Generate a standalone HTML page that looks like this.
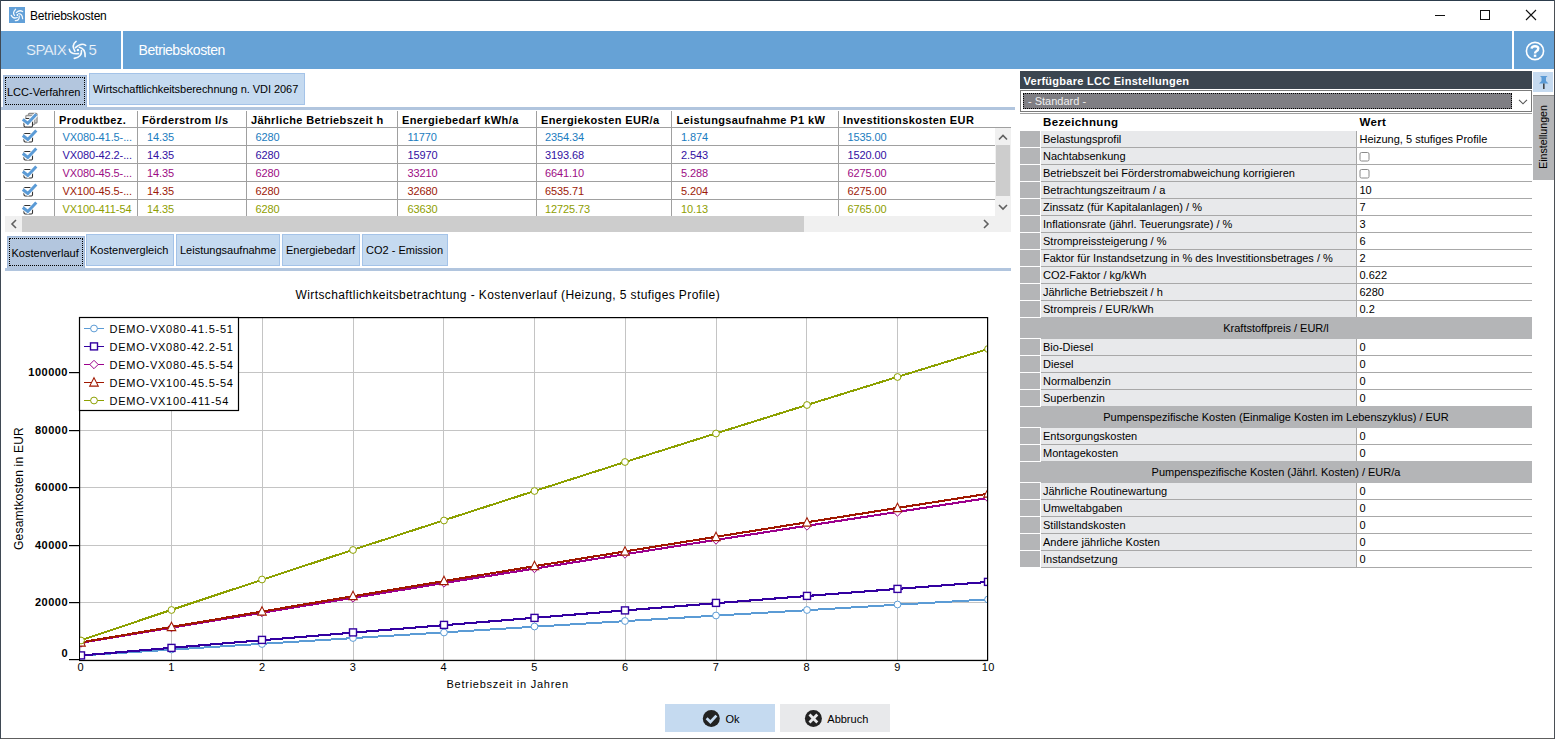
<!DOCTYPE html>
<html><head><meta charset="utf-8"><title>Betriebskosten</title>
<style>
html,body{margin:0;padding:0;}
body{width:1555px;height:739px;position:relative;overflow:hidden;background:#3c4650;font-family:"Liberation Sans", sans-serif;}
.t{position:absolute;white-space:nowrap;line-height:normal;}
.b{position:absolute;box-sizing:border-box;}
svg{position:absolute;left:0;top:0;}
</style></head><body>

<div class="b" style="left:0px;top:0px;width:1555px;height:1px;background:#2c3c4c;"></div>
<div class="b" style="left:0px;top:738px;width:1555px;height:1px;background:#5e5e5e;"></div>
<div class="b" style="left:0px;top:0px;width:1px;height:739px;background:#3f4954;"></div>
<div class="b" style="left:1554px;top:0px;width:1px;height:739px;background:#4a4f55;"></div>
<div class="b" style="left:1px;top:1px;width:1553px;height:737px;background:#fff;"></div>
<svg width="1555" height="70" style="left:0;top:0">
<rect x="9" y="7" width="16" height="16" fill="#62a0d8"/>
<g fill="none" stroke="#fff" stroke-width="1.25" stroke-linecap="round" opacity="0.93">
<path d="M15.6 9.2 Q12.15 12.75 14.5 15.3"/>
<path d="M22.6 11.6 Q19.55 9.5 16.3 12.6"/>
<path d="M18.7 13.6 Q22.35 13.85 22.6 18.7"/>
<path d="M19.2 16 Q19.75 20.7 15.3 20.6"/>
<path d="M11.2 15.3 Q12.75 19.2 17.3 17.5"/>
</g>
<circle cx="17.4" cy="15" r="0.9" fill="#fff"/>
<!-- window controls -->
<rect x="1435" y="15" width="10" height="1" fill="#111"/>
<rect x="1480.5" y="10.5" width="9" height="9" fill="none" stroke="#111" stroke-width="1"/>
<path d="M1526 10 L1536 20 M1536 10 L1526 20" stroke="#111" stroke-width="1.1"/>
</svg>
<div class="t" style="left:30px;top:9px;font-size:12px;color:#000;letter-spacing:-0.2px;">Betriebskosten</div>
<div class="b" style="left:1px;top:31px;width:1553px;height:38px;background:#66a2d6;"></div>
<div class="b" style="left:121px;top:31px;width:2px;height:38px;background:#fff;"></div>
<div class="b" style="left:1512px;top:31px;width:2px;height:38px;background:#fff;"></div>
<div class="t" style="left:26px;top:41px;font-size:15px;color:#f4f8fc;letter-spacing:-0.6px;-webkit-text-stroke:0.22px #66a2d6;">SPAIX</div>
<div class="t" style="left:88.5px;top:41px;font-size:15px;color:#f4f8fc;-webkit-text-stroke:0.22px #66a2d6;">5</div>
<svg width="1555" height="70" style="left:0;top:0">
<g fill="none" stroke="#fff" stroke-width="1.6" stroke-linecap="round" opacity="0.95">
<path d="M76.1 41.4 Q71.1 45.3 74.9 51.2"/>
<path d="M85.7 45.3 Q81.2 42.35 75.5 47.6"/>
<path d="M79.4 47.3 Q85.55 48.65 85.1 56.6"/>
<path d="M81.5 50.6 Q82.1 56.9 74.3 58.4"/>
<path d="M69.3 49.4 Q70.1 54.5 78.5 53.6"/>
</g>
<circle cx="77.9" cy="50" r="1.2" fill="#fff"/>
<circle cx="64.8" cy="50" r="0.8" fill="#dfe9f4"/>
<!-- help -->
<circle cx="1535" cy="51" r="8.6" fill="none" stroke="#fff" stroke-width="1.6"/>
<path d="M1531.6 48.6 Q1531.8 46.2 1535 46.2 Q1538.3 46.2 1538.3 48.6 Q1538.3 50.2 1536.4 51.2 Q1535 52 1535 53.6" fill="none" stroke="#fff" stroke-width="2.4"/>
<rect x="1533.8" y="54.6" width="2.5" height="2.3" fill="#fff"/>
</svg>
<div class="t" style="left:138.5px;top:42px;font-size:14px;color:#fff;letter-spacing:-0.45px;">Betriebskosten</div>
<div class="b" style="left:3px;top:75px;width:84px;height:32px;background:#b3c6de;border:1px solid #9fb7d8;border-bottom:none;"></div>
<div class="b" style="left:5px;top:77px;width:80px;height:28px;border:1px dotted #000;"></div>
<div class="t" style="left:7px;top:86px;font-size:11px;color:#000;">LCC-Verfahren</div>
<div class="b" style="left:89px;top:73px;width:216px;height:32px;background:#c5daf0;border:1px solid #a4c3e8;"></div>
<div class="t" style="left:93px;top:83px;font-size:11px;color:#000;letter-spacing:-0.05px;">Wirtschaftlichkeitsberechnung n. VDI 2067</div>
<div class="b" style="left:1px;top:107px;width:1014px;height:3px;background:#b1c5de;"></div>
<div class="b" style="left:5px;top:127px;width:1006px;height:1px;background:#a0a0a0;"></div>
<div class="b" style="left:5px;top:145px;width:990px;height:1px;background:#a0a0a0;"></div>
<div class="b" style="left:5px;top:163px;width:990px;height:1px;background:#a0a0a0;"></div>
<div class="b" style="left:5px;top:181px;width:990px;height:1px;background:#a0a0a0;"></div>
<div class="b" style="left:5px;top:199px;width:990px;height:1px;background:#a0a0a0;"></div>
<div class="b" style="left:54px;top:111px;width:1px;height:105px;background:#a0a0a0;"></div>
<div class="b" style="left:137px;top:111px;width:1px;height:105px;background:#a0a0a0;"></div>
<div class="b" style="left:246px;top:111px;width:1px;height:105px;background:#a0a0a0;"></div>
<div class="b" style="left:397px;top:111px;width:1px;height:105px;background:#a0a0a0;"></div>
<div class="b" style="left:536px;top:111px;width:1px;height:105px;background:#a0a0a0;"></div>
<div class="b" style="left:671px;top:111px;width:1px;height:105px;background:#a0a0a0;"></div>
<div class="b" style="left:838px;top:111px;width:1px;height:105px;background:#a0a0a0;"></div>
<div class="t" style="left:59px;top:114px;font-size:11px;color:#000;font-weight:700;letter-spacing:0.38px;font-family:'Liberation Sans';">Produktbez.</div>
<div class="t" style="left:142px;top:114px;font-size:11px;color:#000;font-weight:700;letter-spacing:0.38px;font-family:'Liberation Sans';">Förderstrom l/s</div>
<div class="t" style="left:251px;top:114px;font-size:11px;color:#000;font-weight:700;letter-spacing:0.38px;font-family:'Liberation Sans';">Jährliche Betriebszeit h</div>
<div class="t" style="left:402px;top:114px;font-size:11px;color:#000;font-weight:700;letter-spacing:0.38px;font-family:'Liberation Sans';">Energiebedarf kWh/a</div>
<div class="t" style="left:541px;top:114px;font-size:11px;color:#000;font-weight:700;letter-spacing:0.38px;font-family:'Liberation Sans';">Energiekosten EUR/a</div>
<div class="t" style="left:676.5px;top:114px;font-size:11px;color:#000;font-weight:700;letter-spacing:0.38px;font-family:'Liberation Sans';">Leistungsaufnahme P1 kW</div>
<div class="t" style="left:843px;top:114px;font-size:11px;color:#000;font-weight:700;letter-spacing:0.38px;font-family:'Liberation Sans';">Investitionskosten EUR</div>
<div style="position:absolute;left:0;top:0;width:1555px;height:216px;overflow:hidden">
<div class="t" style="left:62.5px;top:131px;font-size:11px;color:#1a7cc0;letter-spacing:-0.1px;">VX080-41.5-...</div>
<div class="t" style="left:147px;top:131px;font-size:11px;color:#1a7cc0;letter-spacing:-0.1px;">14.35</div>
<div class="t" style="left:255.5px;top:131px;font-size:11px;color:#1a7cc0;letter-spacing:-0.1px;">6280</div>
<div class="t" style="left:407.5px;top:131px;font-size:11px;color:#1a7cc0;letter-spacing:-0.1px;">11770</div>
<div class="t" style="left:545px;top:131px;font-size:11px;color:#1a7cc0;letter-spacing:-0.1px;">2354.34</div>
<div class="t" style="left:681px;top:131px;font-size:11px;color:#1a7cc0;letter-spacing:-0.1px;">1.874</div>
<div class="t" style="left:847.5px;top:131px;font-size:11px;color:#1a7cc0;letter-spacing:-0.1px;">1535.00</div>
<div class="t" style="left:62.5px;top:149px;font-size:11px;color:#3210a2;letter-spacing:-0.1px;">VX080-42.2-...</div>
<div class="t" style="left:147px;top:149px;font-size:11px;color:#3210a2;letter-spacing:-0.1px;">14.35</div>
<div class="t" style="left:255.5px;top:149px;font-size:11px;color:#3210a2;letter-spacing:-0.1px;">6280</div>
<div class="t" style="left:407.5px;top:149px;font-size:11px;color:#3210a2;letter-spacing:-0.1px;">15970</div>
<div class="t" style="left:545px;top:149px;font-size:11px;color:#3210a2;letter-spacing:-0.1px;">3193.68</div>
<div class="t" style="left:681px;top:149px;font-size:11px;color:#3210a2;letter-spacing:-0.1px;">2.543</div>
<div class="t" style="left:847.5px;top:149px;font-size:11px;color:#3210a2;letter-spacing:-0.1px;">1520.00</div>
<div class="t" style="left:62.5px;top:167px;font-size:11px;color:#9c0c84;letter-spacing:-0.1px;">VX080-45.5-...</div>
<div class="t" style="left:147px;top:167px;font-size:11px;color:#9c0c84;letter-spacing:-0.1px;">14.35</div>
<div class="t" style="left:255.5px;top:167px;font-size:11px;color:#9c0c84;letter-spacing:-0.1px;">6280</div>
<div class="t" style="left:407.5px;top:167px;font-size:11px;color:#9c0c84;letter-spacing:-0.1px;">33210</div>
<div class="t" style="left:545px;top:167px;font-size:11px;color:#9c0c84;letter-spacing:-0.1px;">6641.10</div>
<div class="t" style="left:681px;top:167px;font-size:11px;color:#9c0c84;letter-spacing:-0.1px;">5.288</div>
<div class="t" style="left:847.5px;top:167px;font-size:11px;color:#9c0c84;letter-spacing:-0.1px;">6275.00</div>
<div class="t" style="left:62.5px;top:185px;font-size:11px;color:#9c1a08;letter-spacing:-0.1px;">VX100-45.5-...</div>
<div class="t" style="left:147px;top:185px;font-size:11px;color:#9c1a08;letter-spacing:-0.1px;">14.35</div>
<div class="t" style="left:255.5px;top:185px;font-size:11px;color:#9c1a08;letter-spacing:-0.1px;">6280</div>
<div class="t" style="left:407.5px;top:185px;font-size:11px;color:#9c1a08;letter-spacing:-0.1px;">32680</div>
<div class="t" style="left:545px;top:185px;font-size:11px;color:#9c1a08;letter-spacing:-0.1px;">6535.71</div>
<div class="t" style="left:681px;top:185px;font-size:11px;color:#9c1a08;letter-spacing:-0.1px;">5.204</div>
<div class="t" style="left:847.5px;top:185px;font-size:11px;color:#9c1a08;letter-spacing:-0.1px;">6275.00</div>
<div class="t" style="left:62.5px;top:203px;font-size:11px;color:#8e9e00;letter-spacing:-0.1px;">VX100-411-54</div>
<div class="t" style="left:147px;top:203px;font-size:11px;color:#8e9e00;letter-spacing:-0.1px;">14.35</div>
<div class="t" style="left:255.5px;top:203px;font-size:11px;color:#8e9e00;letter-spacing:-0.1px;">6280</div>
<div class="t" style="left:407.5px;top:203px;font-size:11px;color:#8e9e00;letter-spacing:-0.1px;">63630</div>
<div class="t" style="left:545px;top:203px;font-size:11px;color:#8e9e00;letter-spacing:-0.1px;">12725.73</div>
<div class="t" style="left:681px;top:203px;font-size:11px;color:#8e9e00;letter-spacing:-0.1px;">10.13</div>
<div class="t" style="left:847.5px;top:203px;font-size:11px;color:#8e9e00;letter-spacing:-0.1px;">6765.00</div>
</div>
<div style="position:absolute;left:0;top:0;width:60px;height:216px;overflow:hidden"><svg width="60" height="230" style="left:0;top:0"><rect x="28.5" y="113.5" width="8.5" height="9.5" rx="1" fill="#f0f0f0" stroke="#8a8a8a" stroke-width="1.3"/><rect x="25.8" y="115.5" width="9" height="9" rx="1" fill="#f6f6f6" stroke="#9a9a9a" stroke-width="1.3"/><rect x="24" y="118.5" width="8.5" height="8.5" rx="1.2" fill="#fff" stroke="#333" stroke-width="1.1"/><path d="M22.8 119.3 L27.8 123.3 L36.3 114.3" fill="none" stroke="#fff" stroke-width="4.6"/><path d="M22.8 119.3 L27.8 123.3 L36.3 114.3" fill="none" stroke="#5b9bd6" stroke-width="3"/><rect x="24" y="133.5" width="8.5" height="8.5" rx="1.2" fill="#fff" stroke="#333" stroke-width="1.1"/><path d="M22.8 135.5 L27.8 139.5 L36.3 130.5" fill="none" stroke="#fff" stroke-width="4.6"/><path d="M22.8 135.5 L27.8 139.5 L36.3 130.5" fill="none" stroke="#5b9bd6" stroke-width="3"/><rect x="24" y="151.5" width="8.5" height="8.5" rx="1.2" fill="#fff" stroke="#333" stroke-width="1.1"/><path d="M22.8 153.5 L27.8 157.5 L36.3 148.5" fill="none" stroke="#fff" stroke-width="4.6"/><path d="M22.8 153.5 L27.8 157.5 L36.3 148.5" fill="none" stroke="#5b9bd6" stroke-width="3"/><rect x="24" y="169.5" width="8.5" height="8.5" rx="1.2" fill="#fff" stroke="#333" stroke-width="1.1"/><path d="M22.8 171.5 L27.8 175.5 L36.3 166.5" fill="none" stroke="#fff" stroke-width="4.6"/><path d="M22.8 171.5 L27.8 175.5 L36.3 166.5" fill="none" stroke="#5b9bd6" stroke-width="3"/><rect x="24" y="187.5" width="8.5" height="8.5" rx="1.2" fill="#fff" stroke="#333" stroke-width="1.1"/><path d="M22.8 189.5 L27.8 193.5 L36.3 184.5" fill="none" stroke="#fff" stroke-width="4.6"/><path d="M22.8 189.5 L27.8 193.5 L36.3 184.5" fill="none" stroke="#5b9bd6" stroke-width="3"/><rect x="24" y="205.5" width="8.5" height="8.5" rx="1.2" fill="#fff" stroke="#333" stroke-width="1.1"/><path d="M22.8 207.5 L27.8 211.5 L36.3 202.5" fill="none" stroke="#fff" stroke-width="4.6"/><path d="M22.8 207.5 L27.8 211.5 L36.3 202.5" fill="none" stroke="#5b9bd6" stroke-width="3"/></svg></div>
<div class="b" style="left:995px;top:128px;width:16px;height:88px;background:#f0f0f0;"></div>
<div class="b" style="left:996px;top:145px;width:14px;height:51px;background:#cdcdcd;"></div>
<div class="b" style="left:5px;top:216px;width:1006px;height:16px;background:#f0f0f0;"></div>
<div class="b" style="left:22px;top:216px;width:782px;height:16px;background:#cdcdcd;"></div>
<svg width="1020" height="240" style="left:0;top:0">
<path d="M999 139.5 L1003 135.5 L1007 139.5" fill="none" stroke="#606060" stroke-width="1.6"/>
<path d="M999 205 L1003 209 L1007 205" fill="none" stroke="#606060" stroke-width="1.6"/>
<path d="M16 220 L12 224 L16 228" fill="none" stroke="#606060" stroke-width="1.6"/>
<path d="M984 220 L988 224 L984 228" fill="none" stroke="#606060" stroke-width="1.6"/>
</svg>
<div class="b" style="left:7px;top:236px;width:78px;height:32px;background:#b3c6de;border:1px solid #9fb7d8;border-bottom:none;"></div>
<div class="b" style="left:9px;top:238px;width:74px;height:28px;border:1px dotted #000;"></div>
<div class="t" style="left:11.5px;top:247px;font-size:11px;color:#000;">Kostenverlauf</div>
<div class="b" style="left:86px;top:234px;width:88px;height:32px;background:#c5daf0;border:1px solid #a4c3e8;"></div>
<div class="t" style="left:90px;top:244px;font-size:11px;color:#000;">Kostenvergleich</div>
<div class="b" style="left:176px;top:234px;width:104px;height:32px;background:#c5daf0;border:1px solid #a4c3e8;"></div>
<div class="t" style="left:180px;top:244px;font-size:11px;color:#000;">Leistungsaufnahme</div>
<div class="b" style="left:282px;top:234px;width:78px;height:32px;background:#c5daf0;border:1px solid #a4c3e8;"></div>
<div class="t" style="left:286px;top:244px;font-size:11px;color:#000;">Energiebedarf</div>
<div class="b" style="left:362px;top:234px;width:86px;height:32px;background:#c5daf0;border:1px solid #a4c3e8;"></div>
<div class="t" style="left:366px;top:244px;font-size:11px;color:#000;">CO2 - Emission</div>
<div class="b" style="left:5px;top:268px;width:1006px;height:3px;background:#b1c5de;"></div>
<div class="t" style="left:295.5px;top:288px;font-size:12px;color:#000;letter-spacing:0.4px;">Wirtschaftlichkeitsbetrachtung - Kostenverlauf (Heizung, 5 stufiges Profile)</div>
<svg width="1010" height="700" style="left:0;top:0">
<rect x="171" y="318" width="1" height="342" fill="#c4c4c4"/>
<rect x="262" y="318" width="1" height="342" fill="#c4c4c4"/>
<rect x="353" y="318" width="1" height="342" fill="#c4c4c4"/>
<rect x="443" y="318" width="1" height="342" fill="#c4c4c4"/>
<rect x="534" y="318" width="1" height="342" fill="#c4c4c4"/>
<rect x="625" y="318" width="1" height="342" fill="#c4c4c4"/>
<rect x="716" y="318" width="1" height="342" fill="#c4c4c4"/>
<rect x="806" y="318" width="1" height="342" fill="#c4c4c4"/>
<rect x="897" y="318" width="1" height="342" fill="#c4c4c4"/>
<rect x="80" y="602" width="907" height="1" fill="#c4c4c4"/>
<rect x="80" y="545" width="907" height="1" fill="#c4c4c4"/>
<rect x="80" y="487" width="907" height="1" fill="#c4c4c4"/>
<rect x="80" y="430" width="907" height="1" fill="#c4c4c4"/>
<rect x="80" y="372" width="907" height="1" fill="#c4c4c4"/>
<rect x="79" y="317" width="909" height="1.2" fill="#000"/>
<rect x="987" y="317" width="1.2" height="344" fill="#000"/>
<rect x="79" y="317" width="1.2" height="344" fill="#000"/>
<rect x="79" y="659.8" width="909" height="1.3" fill="#000"/>
<rect x="69" y="659" width="10" height="1.2" fill="#000"/>
<rect x="69" y="602" width="10" height="1.2" fill="#000"/>
<rect x="69" y="545" width="10" height="1.2" fill="#000"/>
<rect x="69" y="487" width="10" height="1.2" fill="#000"/>
<rect x="69" y="430" width="10" height="1.2" fill="#000"/>
<rect x="69" y="372" width="10" height="1.2" fill="#000"/>
<defs><clipPath id="pc"><rect x="80" y="318" width="907" height="342"/></clipPath></defs>
<g clip-path="url(#pc)">
<path d="M80.8 655.5 L171.5 649.6 L262.2 643.8 L353.0 638.1 L443.8 632.4 L534.5 626.7 L625.2 621.1 L716.0 615.6 L806.8 610.2 L897.5 604.7 L988.2 599.4" fill="none" stroke="#5b9bd5" stroke-width="2.0" shape-rendering="crispEdges"/>
<circle cx="81.0" cy="655.5" r="3.4" fill="#fff" stroke="#5b9bd5" stroke-width="1"/>
<circle cx="171.5" cy="649.5" r="3.4" fill="#fff" stroke="#5b9bd5" stroke-width="1"/>
<circle cx="262.0" cy="644.0" r="3.4" fill="#fff" stroke="#5b9bd5" stroke-width="1"/>
<circle cx="353.0" cy="638.0" r="3.4" fill="#fff" stroke="#5b9bd5" stroke-width="1"/>
<circle cx="444.0" cy="632.5" r="3.4" fill="#fff" stroke="#5b9bd5" stroke-width="1"/>
<circle cx="534.5" cy="626.5" r="3.4" fill="#fff" stroke="#5b9bd5" stroke-width="1"/>
<circle cx="625.0" cy="621.0" r="3.4" fill="#fff" stroke="#5b9bd5" stroke-width="1"/>
<circle cx="716.0" cy="615.5" r="3.4" fill="#fff" stroke="#5b9bd5" stroke-width="1"/>
<circle cx="807.0" cy="610.0" r="3.4" fill="#fff" stroke="#5b9bd5" stroke-width="1"/>
<circle cx="897.5" cy="604.5" r="3.4" fill="#fff" stroke="#5b9bd5" stroke-width="1"/>
<circle cx="988.0" cy="599.5" r="3.4" fill="#fff" stroke="#5b9bd5" stroke-width="1"/>
<path d="M80.8 655.5 L171.5 647.8 L262.2 640.2 L353.0 632.6 L443.8 625.2 L534.5 617.8 L625.2 610.4 L716.0 603.2 L806.8 596.0 L897.5 588.9 L988.2 581.9" fill="none" stroke="#3300a0" stroke-width="2.1" shape-rendering="crispEdges"/>
<rect x="77.5" y="651.9" width="7" height="7" fill="#fff" stroke="#3300a0" stroke-width="1.4"/>
<rect x="168.0" y="644.4" width="7" height="7" fill="#fff" stroke="#3300a0" stroke-width="1.4"/>
<rect x="258.5" y="636.4" width="7" height="7" fill="#fff" stroke="#3300a0" stroke-width="1.4"/>
<rect x="349.5" y="628.9" width="7" height="7" fill="#fff" stroke="#3300a0" stroke-width="1.4"/>
<rect x="440.5" y="621.4" width="7" height="7" fill="#fff" stroke="#3300a0" stroke-width="1.4"/>
<rect x="531.0" y="614.4" width="7" height="7" fill="#fff" stroke="#3300a0" stroke-width="1.4"/>
<rect x="621.5" y="606.9" width="7" height="7" fill="#fff" stroke="#3300a0" stroke-width="1.4"/>
<rect x="712.5" y="599.4" width="7" height="7" fill="#fff" stroke="#3300a0" stroke-width="1.4"/>
<rect x="803.5" y="592.4" width="7" height="7" fill="#fff" stroke="#3300a0" stroke-width="1.4"/>
<rect x="894.0" y="585.4" width="7" height="7" fill="#fff" stroke="#3300a0" stroke-width="1.4"/>
<rect x="984.5" y="578.4" width="7" height="7" fill="#fff" stroke="#3300a0" stroke-width="1.4"/>
<path d="M80.8 642.8 L171.5 627.7 L262.2 612.7 L353.0 597.8 L443.8 583.1 L534.5 568.6 L625.2 554.2 L716.0 539.9 L806.8 525.8 L897.5 511.9 L988.2 498.0" fill="none" stroke="#9c008c" stroke-width="2.1" shape-rendering="crispEdges"/>
<path d="M81.0 638.8 L85.2 643.0 L81.0 647.2 L76.8 643.0 Z" fill="#fff" stroke="#9c008c" stroke-width="1"/>
<path d="M171.5 623.3 L175.7 627.5 L171.5 631.7 L167.3 627.5 Z" fill="#fff" stroke="#9c008c" stroke-width="1"/>
<path d="M262.0 608.3 L266.2 612.5 L262.0 616.7 L257.8 612.5 Z" fill="#fff" stroke="#9c008c" stroke-width="1"/>
<path d="M353.0 593.8 L357.2 598.0 L353.0 602.2 L348.8 598.0 Z" fill="#fff" stroke="#9c008c" stroke-width="1"/>
<path d="M444.0 578.8 L448.2 583.0 L444.0 587.2 L439.8 583.0 Z" fill="#fff" stroke="#9c008c" stroke-width="1"/>
<path d="M534.5 564.3 L538.7 568.5 L534.5 572.7 L530.3 568.5 Z" fill="#fff" stroke="#9c008c" stroke-width="1"/>
<path d="M625.0 549.8 L629.2 554.0 L625.0 558.2 L620.8 554.0 Z" fill="#fff" stroke="#9c008c" stroke-width="1"/>
<path d="M716.0 535.8 L720.2 540.0 L716.0 544.2 L711.8 540.0 Z" fill="#fff" stroke="#9c008c" stroke-width="1"/>
<path d="M807.0 521.8 L811.2 526.0 L807.0 530.2 L802.8 526.0 Z" fill="#fff" stroke="#9c008c" stroke-width="1"/>
<path d="M897.5 507.8 L901.7 512.0 L897.5 516.2 L893.3 512.0 Z" fill="#fff" stroke="#9c008c" stroke-width="1"/>
<path d="M988.0 493.8 L992.2 498.0 L988.0 502.2 L983.8 498.0 Z" fill="#fff" stroke="#9c008c" stroke-width="1"/>
<path d="M80.8 642.4 L171.5 626.9 L262.2 611.5 L353.0 596.2 L443.8 581.1 L534.5 566.2 L625.2 551.4 L716.0 536.8 L806.8 522.3 L897.5 507.9 L988.2 493.7" fill="none" stroke="#a01800" stroke-width="2.1" shape-rendering="crispEdges"/>
<path d="M81.0 637.7 L85.3 646.1 L76.7 646.1 Z" fill="#fff" stroke="#a01800" stroke-width="1.05"/>
<path d="M171.5 622.2 L175.8 630.6 L167.2 630.6 Z" fill="#fff" stroke="#a01800" stroke-width="1.05"/>
<path d="M262.0 606.7 L266.3 615.1 L257.7 615.1 Z" fill="#fff" stroke="#a01800" stroke-width="1.05"/>
<path d="M353.0 591.2 L357.3 599.6 L348.7 599.6 Z" fill="#fff" stroke="#a01800" stroke-width="1.05"/>
<path d="M444.0 576.2 L448.3 584.6 L439.7 584.6 Z" fill="#fff" stroke="#a01800" stroke-width="1.05"/>
<path d="M534.5 561.2 L538.8 569.6 L530.2 569.6 Z" fill="#fff" stroke="#a01800" stroke-width="1.05"/>
<path d="M625.0 546.7 L629.3 555.1 L620.7 555.1 Z" fill="#fff" stroke="#a01800" stroke-width="1.05"/>
<path d="M716.0 532.2 L720.3 540.6 L711.7 540.6 Z" fill="#fff" stroke="#a01800" stroke-width="1.05"/>
<path d="M807.0 517.7 L811.3 526.1 L802.7 526.1 Z" fill="#fff" stroke="#a01800" stroke-width="1.05"/>
<path d="M897.5 503.2 L901.8 511.6 L893.2 511.6 Z" fill="#fff" stroke="#a01800" stroke-width="1.05"/>
<path d="M988.0 488.7 L992.3 497.1 L983.7 497.1 Z" fill="#fff" stroke="#a01800" stroke-width="1.05"/>
<path d="M80.8 640.3 L171.5 609.8 L262.2 579.7 L353.0 549.8 L443.8 520.3 L534.5 491.0 L625.2 462.0 L716.0 433.4 L806.8 405.0 L897.5 376.9 L988.2 349.0" fill="none" stroke="#8ca000" stroke-width="2.0" shape-rendering="crispEdges"/>
<circle cx="81.0" cy="640.5" r="3.4" fill="#fff" stroke="#8ca000" stroke-width="1"/>
<circle cx="171.5" cy="610.0" r="3.4" fill="#fff" stroke="#8ca000" stroke-width="1"/>
<circle cx="262.0" cy="579.5" r="3.4" fill="#fff" stroke="#8ca000" stroke-width="1"/>
<circle cx="353.0" cy="550.0" r="3.4" fill="#fff" stroke="#8ca000" stroke-width="1"/>
<circle cx="444.0" cy="520.5" r="3.4" fill="#fff" stroke="#8ca000" stroke-width="1"/>
<circle cx="534.5" cy="491.0" r="3.4" fill="#fff" stroke="#8ca000" stroke-width="1"/>
<circle cx="625.0" cy="462.0" r="3.4" fill="#fff" stroke="#8ca000" stroke-width="1"/>
<circle cx="716.0" cy="433.5" r="3.4" fill="#fff" stroke="#8ca000" stroke-width="1"/>
<circle cx="807.0" cy="405.0" r="3.4" fill="#fff" stroke="#8ca000" stroke-width="1"/>
<circle cx="897.5" cy="377.0" r="3.4" fill="#fff" stroke="#8ca000" stroke-width="1"/>
<circle cx="988.0" cy="349.0" r="3.4" fill="#fff" stroke="#8ca000" stroke-width="1"/>
</g>
<rect x="79.5" y="317.5" width="159" height="93" fill="#fff" stroke="#000" stroke-width="1.2"/>
<rect x="84" y="328.0" width="20" height="1" fill="#5b9bd5"/>
<circle cx="94" cy="328.5" r="3.4" fill="#fff" stroke="#5b9bd5" stroke-width="1"/>
<rect x="84" y="346.0" width="20" height="1" fill="#3300a0"/>
<rect x="90.5" y="342.9" width="7" height="7" fill="#fff" stroke="#3300a0" stroke-width="1.4"/>
<rect x="84" y="364.0" width="20" height="1" fill="#9c008c"/>
<path d="M94 360.3 L98.2 364.5 L94 368.7 L89.8 364.5 Z" fill="#fff" stroke="#9c008c" stroke-width="1"/>
<rect x="84" y="382.0" width="20" height="1" fill="#a01800"/>
<path d="M94 377.7 L98.3 386.1 L89.7 386.1 Z" fill="#fff" stroke="#a01800" stroke-width="1.05"/>
<rect x="84" y="400.0" width="20" height="1" fill="#8ca000"/>
<circle cx="94" cy="400.5" r="3.4" fill="#fff" stroke="#8ca000" stroke-width="1"/>
<text x="0" y="0" transform="translate(22.5 488.5) rotate(-90)" text-anchor="middle" font-family="Liberation Sans" font-size="12" letter-spacing="0.22">Gesamtkosten in EUR</text>
</svg>
<div class="t" style="left:109.5px;top:323px;font-size:11px;color:#000;letter-spacing:0.75px;">DEMO-VX080-41.5-51</div>
<div class="t" style="left:109.5px;top:341px;font-size:11px;color:#000;letter-spacing:0.75px;">DEMO-VX080-42.2-51</div>
<div class="t" style="left:109.5px;top:359px;font-size:11px;color:#000;letter-spacing:0.75px;">DEMO-VX080-45.5-54</div>
<div class="t" style="left:109.5px;top:377px;font-size:11px;color:#000;letter-spacing:0.75px;">DEMO-VX100-45.5-54</div>
<div class="t" style="left:109.5px;top:395px;font-size:11px;color:#000;letter-spacing:0.75px;">DEMO-VX100-411-54</div>
<div class="t" style="right:1487px;top:646.5px;font-size:11px;font-weight:700;letter-spacing:0.5px;">0</div>
<div class="t" style="right:1487px;top:596px;font-size:11px;font-weight:700;letter-spacing:0.5px;">20000</div>
<div class="t" style="right:1487px;top:539px;font-size:11px;font-weight:700;letter-spacing:0.5px;">40000</div>
<div class="t" style="right:1487px;top:481px;font-size:11px;font-weight:700;letter-spacing:0.5px;">60000</div>
<div class="t" style="right:1487px;top:424px;font-size:11px;font-weight:700;letter-spacing:0.5px;">80000</div>
<div class="t" style="right:1487px;top:366px;font-size:11px;font-weight:700;letter-spacing:0.5px;">100000</div>
<div class="t" style="left:60.8px;width:40px;text-align:center;top:661px;font-size:11px;letter-spacing:0.3px;">0</div>
<div class="t" style="left:151.5px;width:40px;text-align:center;top:661px;font-size:11px;letter-spacing:0.3px;">1</div>
<div class="t" style="left:242.2px;width:40px;text-align:center;top:661px;font-size:11px;letter-spacing:0.3px;">2</div>
<div class="t" style="left:333.0px;width:40px;text-align:center;top:661px;font-size:11px;letter-spacing:0.3px;">3</div>
<div class="t" style="left:423.8px;width:40px;text-align:center;top:661px;font-size:11px;letter-spacing:0.3px;">4</div>
<div class="t" style="left:514.5px;width:40px;text-align:center;top:661px;font-size:11px;letter-spacing:0.3px;">5</div>
<div class="t" style="left:605.2px;width:40px;text-align:center;top:661px;font-size:11px;letter-spacing:0.3px;">6</div>
<div class="t" style="left:696.0px;width:40px;text-align:center;top:661px;font-size:11px;letter-spacing:0.3px;">7</div>
<div class="t" style="left:786.8px;width:40px;text-align:center;top:661px;font-size:11px;letter-spacing:0.3px;">8</div>
<div class="t" style="left:877.5px;width:40px;text-align:center;top:661px;font-size:11px;letter-spacing:0.3px;">9</div>
<div class="t" style="left:968.2px;width:40px;text-align:center;top:661px;font-size:11px;letter-spacing:0.3px;">10</div>
<div class="t" style="left:446.5px;top:678px;font-size:11px;color:#000;letter-spacing:0.75px;">Betriebszeit in Jahren</div>
<div class="b" style="left:1020px;top:71px;width:512px;height:18px;background:#3b4550;"></div>
<div class="t" style="left:1023.5px;top:74.5px;font-size:11px;color:#fff;font-weight:700;letter-spacing:0.27px;">Verfügbare LCC Einstellungen</div>
<div class="b" style="left:1020px;top:90px;width:512px;height:22px;background:#fff;border:1px solid #7a7a7a;"></div>
<div class="b" style="left:1023px;top:93px;width:489px;height:16px;background:#7f7e83;border:1px dotted #000;"></div>
<div class="t" style="left:1028px;top:95px;font-size:11px;color:#f0f0f0;">- Standard -</div>
<svg width="1555" height="739" style="left:0;top:0;pointer-events:none"><path d="M1519 99.8 L1523 103.8 L1527 99.8" fill="none" stroke="#555" stroke-width="1.1"/></svg>
<div class="b" style="left:1020px;top:113px;width:512px;height:1px;background:#a0a0a0;"></div>
<div class="t" style="left:1043px;top:116px;font-size:11.5px;color:#000;font-weight:700;letter-spacing:0.35px;">Bezeichnung</div>
<div class="t" style="left:1359.5px;top:116px;font-size:11.5px;color:#000;font-weight:700;letter-spacing:0.35px;">Wert</div>
<div class="b" style="left:1020px;top:131px;width:20px;height:16px;background:#b4b5b7;"></div>
<div class="b" style="left:1041px;top:131px;width:315px;height:16px;background:#e8e9eb;"></div>
<div class="b" style="left:1041px;top:147px;width:491px;height:1px;background:#a8a8a8;"></div>
<div class="b" style="left:1356px;top:131px;width:1px;height:16px;background:#a8a8a8;"></div>
<div class="t" style="left:1043px;top:133px;font-size:11px;color:#000;">Belastungsprofil</div>
<div class="t" style="left:1359.5px;top:133px;font-size:11px;color:#000;">Heizung, 5 stufiges Profile</div>
<div class="b" style="left:1020px;top:148px;width:20px;height:16px;background:#b4b5b7;"></div>
<div class="b" style="left:1041px;top:148px;width:315px;height:16px;background:#e8e9eb;"></div>
<div class="b" style="left:1041px;top:164px;width:491px;height:1px;background:#a8a8a8;"></div>
<div class="b" style="left:1356px;top:148px;width:1px;height:16px;background:#a8a8a8;"></div>
<div class="t" style="left:1043px;top:150px;font-size:11px;color:#000;">Nachtabsenkung</div>
<div class="b" style="left:1020px;top:165px;width:20px;height:16px;background:#b4b5b7;"></div>
<div class="b" style="left:1041px;top:165px;width:315px;height:16px;background:#e8e9eb;"></div>
<div class="b" style="left:1041px;top:181px;width:491px;height:1px;background:#a8a8a8;"></div>
<div class="b" style="left:1356px;top:165px;width:1px;height:16px;background:#a8a8a8;"></div>
<div class="t" style="left:1043px;top:167px;font-size:11px;color:#000;">Betriebszeit bei Förderstromabweichung korrigieren</div>
<div class="b" style="left:1020px;top:182px;width:20px;height:16px;background:#b4b5b7;"></div>
<div class="b" style="left:1041px;top:182px;width:315px;height:16px;background:#e8e9eb;"></div>
<div class="b" style="left:1041px;top:198px;width:491px;height:1px;background:#a8a8a8;"></div>
<div class="b" style="left:1356px;top:182px;width:1px;height:16px;background:#a8a8a8;"></div>
<div class="t" style="left:1043px;top:184px;font-size:11px;color:#000;">Betrachtungszeitraum / a</div>
<div class="t" style="left:1359.5px;top:184px;font-size:11px;color:#000;">10</div>
<div class="b" style="left:1020px;top:199px;width:20px;height:16px;background:#b4b5b7;"></div>
<div class="b" style="left:1041px;top:199px;width:315px;height:16px;background:#e8e9eb;"></div>
<div class="b" style="left:1041px;top:215px;width:491px;height:1px;background:#a8a8a8;"></div>
<div class="b" style="left:1356px;top:199px;width:1px;height:16px;background:#a8a8a8;"></div>
<div class="t" style="left:1043px;top:201px;font-size:11px;color:#000;">Zinssatz (für Kapitalanlagen) / %</div>
<div class="t" style="left:1359.5px;top:201px;font-size:11px;color:#000;">7</div>
<div class="b" style="left:1020px;top:216px;width:20px;height:16px;background:#b4b5b7;"></div>
<div class="b" style="left:1041px;top:216px;width:315px;height:16px;background:#e8e9eb;"></div>
<div class="b" style="left:1041px;top:232px;width:491px;height:1px;background:#a8a8a8;"></div>
<div class="b" style="left:1356px;top:216px;width:1px;height:16px;background:#a8a8a8;"></div>
<div class="t" style="left:1043px;top:218px;font-size:11px;color:#000;">Inflationsrate (jährl. Teuerungsrate) / %</div>
<div class="t" style="left:1359.5px;top:218px;font-size:11px;color:#000;">3</div>
<div class="b" style="left:1020px;top:233px;width:20px;height:16px;background:#b4b5b7;"></div>
<div class="b" style="left:1041px;top:233px;width:315px;height:16px;background:#e8e9eb;"></div>
<div class="b" style="left:1041px;top:249px;width:491px;height:1px;background:#a8a8a8;"></div>
<div class="b" style="left:1356px;top:233px;width:1px;height:16px;background:#a8a8a8;"></div>
<div class="t" style="left:1043px;top:235px;font-size:11px;color:#000;">Strompreissteigerung / %</div>
<div class="t" style="left:1359.5px;top:235px;font-size:11px;color:#000;">6</div>
<div class="b" style="left:1020px;top:250px;width:20px;height:16px;background:#b4b5b7;"></div>
<div class="b" style="left:1041px;top:250px;width:315px;height:16px;background:#e8e9eb;"></div>
<div class="b" style="left:1041px;top:266px;width:491px;height:1px;background:#a8a8a8;"></div>
<div class="b" style="left:1356px;top:250px;width:1px;height:16px;background:#a8a8a8;"></div>
<div class="t" style="left:1043px;top:252px;font-size:11px;color:#000;">Faktor für Instandsetzung in % des Investitionsbetrages / %</div>
<div class="t" style="left:1359.5px;top:252px;font-size:11px;color:#000;">2</div>
<div class="b" style="left:1020px;top:267px;width:20px;height:16px;background:#b4b5b7;"></div>
<div class="b" style="left:1041px;top:267px;width:315px;height:16px;background:#e8e9eb;"></div>
<div class="b" style="left:1041px;top:283px;width:491px;height:1px;background:#a8a8a8;"></div>
<div class="b" style="left:1356px;top:267px;width:1px;height:16px;background:#a8a8a8;"></div>
<div class="t" style="left:1043px;top:269px;font-size:11px;color:#000;">CO2-Faktor / kg/kWh</div>
<div class="t" style="left:1359.5px;top:269px;font-size:11px;color:#000;">0.622</div>
<div class="b" style="left:1020px;top:284px;width:20px;height:16px;background:#b4b5b7;"></div>
<div class="b" style="left:1041px;top:284px;width:315px;height:16px;background:#e8e9eb;"></div>
<div class="b" style="left:1041px;top:300px;width:491px;height:1px;background:#a8a8a8;"></div>
<div class="b" style="left:1356px;top:284px;width:1px;height:16px;background:#a8a8a8;"></div>
<div class="t" style="left:1043px;top:286px;font-size:11px;color:#000;">Jährliche Betriebszeit / h</div>
<div class="t" style="left:1359.5px;top:286px;font-size:11px;color:#000;">6280</div>
<div class="b" style="left:1020px;top:301px;width:20px;height:16px;background:#b4b5b7;"></div>
<div class="b" style="left:1041px;top:301px;width:315px;height:16px;background:#e8e9eb;"></div>
<div class="b" style="left:1041px;top:317px;width:491px;height:1px;background:#a8a8a8;"></div>
<div class="b" style="left:1356px;top:301px;width:1px;height:16px;background:#a8a8a8;"></div>
<div class="t" style="left:1043px;top:303px;font-size:11px;color:#000;">Strompreis / EUR/kWh</div>
<div class="t" style="left:1359.5px;top:303px;font-size:11px;color:#000;">0.2</div>
<div class="b" style="left:1041px;top:317px;width:491px;height:22px;background:#b4b5b7;"></div>
<div class="b" style="left:1020px;top:318px;width:21px;height:20px;background:#b4b5b7;"></div>
<div class="t" style="left:1020px;width:512px;text-align:center;top:322px;font-size:11px;color:#000;">Kraftstoffpreis / EUR/l</div>
<div class="b" style="left:1020px;top:339px;width:20px;height:16px;background:#b4b5b7;"></div>
<div class="b" style="left:1041px;top:339px;width:315px;height:16px;background:#e8e9eb;"></div>
<div class="b" style="left:1041px;top:355px;width:491px;height:1px;background:#a8a8a8;"></div>
<div class="b" style="left:1356px;top:339px;width:1px;height:16px;background:#a8a8a8;"></div>
<div class="t" style="left:1043px;top:341px;font-size:11px;color:#000;">Bio-Diesel</div>
<div class="t" style="left:1359.5px;top:341px;font-size:11px;color:#000;">0</div>
<div class="b" style="left:1020px;top:356px;width:20px;height:16px;background:#b4b5b7;"></div>
<div class="b" style="left:1041px;top:356px;width:315px;height:16px;background:#e8e9eb;"></div>
<div class="b" style="left:1041px;top:372px;width:491px;height:1px;background:#a8a8a8;"></div>
<div class="b" style="left:1356px;top:356px;width:1px;height:16px;background:#a8a8a8;"></div>
<div class="t" style="left:1043px;top:358px;font-size:11px;color:#000;">Diesel</div>
<div class="t" style="left:1359.5px;top:358px;font-size:11px;color:#000;">0</div>
<div class="b" style="left:1020px;top:373px;width:20px;height:16px;background:#b4b5b7;"></div>
<div class="b" style="left:1041px;top:373px;width:315px;height:16px;background:#e8e9eb;"></div>
<div class="b" style="left:1041px;top:389px;width:491px;height:1px;background:#a8a8a8;"></div>
<div class="b" style="left:1356px;top:373px;width:1px;height:16px;background:#a8a8a8;"></div>
<div class="t" style="left:1043px;top:375px;font-size:11px;color:#000;">Normalbenzin</div>
<div class="t" style="left:1359.5px;top:375px;font-size:11px;color:#000;">0</div>
<div class="b" style="left:1020px;top:390px;width:20px;height:16px;background:#b4b5b7;"></div>
<div class="b" style="left:1041px;top:390px;width:315px;height:16px;background:#e8e9eb;"></div>
<div class="b" style="left:1041px;top:406px;width:491px;height:1px;background:#a8a8a8;"></div>
<div class="b" style="left:1356px;top:390px;width:1px;height:16px;background:#a8a8a8;"></div>
<div class="t" style="left:1043px;top:392px;font-size:11px;color:#000;">Superbenzin</div>
<div class="t" style="left:1359.5px;top:392px;font-size:11px;color:#000;">0</div>
<div class="b" style="left:1041px;top:406px;width:491px;height:22px;background:#b4b5b7;"></div>
<div class="b" style="left:1020px;top:407px;width:21px;height:20px;background:#b4b5b7;"></div>
<div class="t" style="left:1020px;width:512px;text-align:center;top:411px;font-size:11px;color:#000;">Pumpenspezifische Kosten (Einmalige Kosten im Lebenszyklus) / EUR</div>
<div class="b" style="left:1020px;top:428px;width:20px;height:16px;background:#b4b5b7;"></div>
<div class="b" style="left:1041px;top:428px;width:315px;height:16px;background:#e8e9eb;"></div>
<div class="b" style="left:1041px;top:444px;width:491px;height:1px;background:#a8a8a8;"></div>
<div class="b" style="left:1356px;top:428px;width:1px;height:16px;background:#a8a8a8;"></div>
<div class="t" style="left:1043px;top:430px;font-size:11px;color:#000;">Entsorgungskosten</div>
<div class="t" style="left:1359.5px;top:430px;font-size:11px;color:#000;">0</div>
<div class="b" style="left:1020px;top:445px;width:20px;height:16px;background:#b4b5b7;"></div>
<div class="b" style="left:1041px;top:445px;width:315px;height:16px;background:#e8e9eb;"></div>
<div class="b" style="left:1041px;top:461px;width:491px;height:1px;background:#a8a8a8;"></div>
<div class="b" style="left:1356px;top:445px;width:1px;height:16px;background:#a8a8a8;"></div>
<div class="t" style="left:1043px;top:447px;font-size:11px;color:#000;">Montagekosten</div>
<div class="t" style="left:1359.5px;top:447px;font-size:11px;color:#000;">0</div>
<div class="b" style="left:1041px;top:461px;width:491px;height:22px;background:#b4b5b7;"></div>
<div class="b" style="left:1020px;top:462px;width:21px;height:20px;background:#b4b5b7;"></div>
<div class="t" style="left:1020px;width:512px;text-align:center;top:466px;font-size:11px;color:#000;">Pumpenspezifische Kosten (Jährl. Kosten) / EUR/a</div>
<div class="b" style="left:1020px;top:483px;width:20px;height:16px;background:#b4b5b7;"></div>
<div class="b" style="left:1041px;top:483px;width:315px;height:16px;background:#e8e9eb;"></div>
<div class="b" style="left:1041px;top:499px;width:491px;height:1px;background:#a8a8a8;"></div>
<div class="b" style="left:1356px;top:483px;width:1px;height:16px;background:#a8a8a8;"></div>
<div class="t" style="left:1043px;top:485px;font-size:11px;color:#000;">Jährliche Routinewartung</div>
<div class="t" style="left:1359.5px;top:485px;font-size:11px;color:#000;">0</div>
<div class="b" style="left:1020px;top:500px;width:20px;height:16px;background:#b4b5b7;"></div>
<div class="b" style="left:1041px;top:500px;width:315px;height:16px;background:#e8e9eb;"></div>
<div class="b" style="left:1041px;top:516px;width:491px;height:1px;background:#a8a8a8;"></div>
<div class="b" style="left:1356px;top:500px;width:1px;height:16px;background:#a8a8a8;"></div>
<div class="t" style="left:1043px;top:502px;font-size:11px;color:#000;">Umweltabgaben</div>
<div class="t" style="left:1359.5px;top:502px;font-size:11px;color:#000;">0</div>
<div class="b" style="left:1020px;top:517px;width:20px;height:16px;background:#b4b5b7;"></div>
<div class="b" style="left:1041px;top:517px;width:315px;height:16px;background:#e8e9eb;"></div>
<div class="b" style="left:1041px;top:533px;width:491px;height:1px;background:#a8a8a8;"></div>
<div class="b" style="left:1356px;top:517px;width:1px;height:16px;background:#a8a8a8;"></div>
<div class="t" style="left:1043px;top:519px;font-size:11px;color:#000;">Stillstandskosten</div>
<div class="t" style="left:1359.5px;top:519px;font-size:11px;color:#000;">0</div>
<div class="b" style="left:1020px;top:534px;width:20px;height:16px;background:#b4b5b7;"></div>
<div class="b" style="left:1041px;top:534px;width:315px;height:16px;background:#e8e9eb;"></div>
<div class="b" style="left:1041px;top:550px;width:491px;height:1px;background:#a8a8a8;"></div>
<div class="b" style="left:1356px;top:534px;width:1px;height:16px;background:#a8a8a8;"></div>
<div class="t" style="left:1043px;top:536px;font-size:11px;color:#000;">Andere jährliche Kosten</div>
<div class="t" style="left:1359.5px;top:536px;font-size:11px;color:#000;">0</div>
<div class="b" style="left:1020px;top:551px;width:20px;height:16px;background:#b4b5b7;"></div>
<div class="b" style="left:1041px;top:551px;width:315px;height:16px;background:#e8e9eb;"></div>
<div class="b" style="left:1041px;top:567px;width:491px;height:1px;background:#a8a8a8;"></div>
<div class="b" style="left:1356px;top:551px;width:1px;height:16px;background:#a8a8a8;"></div>
<div class="t" style="left:1043px;top:553px;font-size:11px;color:#000;">Instandsetzung</div>
<div class="t" style="left:1359.5px;top:553px;font-size:11px;color:#000;">0</div>
<div class="b" style="left:1533px;top:95px;width:21px;height:85px;background:#b4b5b7;border-top:1px solid #8c8c8c;"></div>
<div class="t" style="left:1543px;top:137px;font-size:10.6px;color:#000;transform:translate(-50%,-50%) rotate(-90deg);transform-origin:center;">Einstellungen</div>
<div class="b" style="left:665px;top:704px;width:110px;height:28px;background:#c5daf0;"></div>
<div class="b" style="left:780px;top:704px;width:110px;height:28px;background:#e8e9eb;"></div>
<svg width="1555" height="739" style="left:0;top:0;pointer-events:none">
<rect x="1360" y="152.5" width="9" height="8.5" rx="1.5" fill="#fff" stroke="#8a8a8a" stroke-width="1"/>
<rect x="1360" y="169.5" width="9" height="8.5" rx="1.5" fill="#fff" stroke="#8a8a8a" stroke-width="1"/>
<rect x="1533" y="72" width="20" height="20" fill="#c5daf0"/>
<path d="M1540 76 L1547.5 76 L1546 77.5 L1546 81 L1548.5 83.5 L1539 83.5 L1541.5 81 L1541.5 77.5 Z" fill="#5b9bd6"/>
<rect x="1543.2" y="83.5" width="1.3" height="5.5" fill="#222"/>
<circle cx="711.3" cy="718.5" r="8.5" fill="#222"/>
<path d="M706.6 718.3 L710.4 722 L716.4 715.6" fill="none" stroke="#c5daf0" stroke-width="2.7"/>
<circle cx="813.4" cy="718.5" r="8.5" fill="#222"/>
<path d="M809.5 714.6 L817.3 722.4 M817.3 714.6 L809.5 722.4" fill="none" stroke="#e8e9eb" stroke-width="2.8"/>
</svg>
<div class="t" style="left:725.5px;top:713px;font-size:11px;color:#000;">Ok</div>
<div class="t" style="left:827.3px;top:713px;font-size:11px;color:#000;">Abbruch</div>
</body></html>
